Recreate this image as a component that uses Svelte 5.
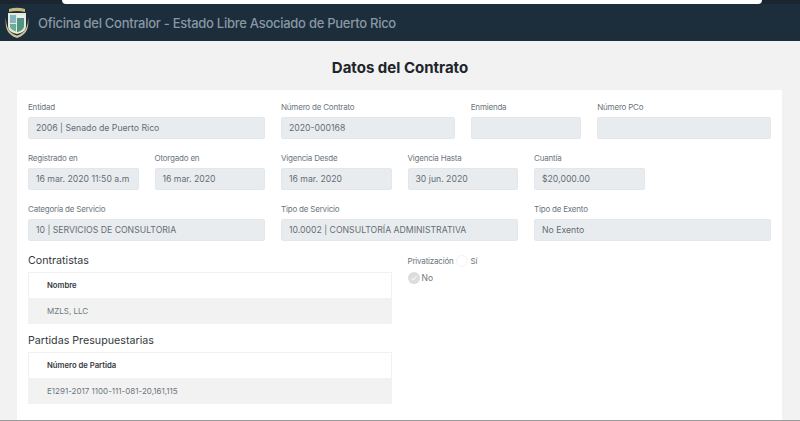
<script lang="ts">
    type Field = { label: string; value: string; span: number };

    const fields: Field[] = [
        { label: 'Entidad', value: '2006 | Senado de Puerto Rico', span: 4 },
        { label: 'Número de Contrato', value: '2020-000168', span: 3 },
        { label: 'Enmienda', value: '', span: 2 },
        { label: 'Número PCo', value: '', span: 3 },
        { label: 'Registrado en', value: '16 mar. 2020 11:50 a.m', span: 2 },
        { label: 'Otorgado en', value: '16 mar. 2020', span: 2 },
        { label: 'Vigencia Desde', value: '16 mar. 2020', span: 2 },
        { label: 'Vigencia Hasta', value: '30 jun. 2020', span: 2 },
        { label: 'Cuantía', value: '$20,000.00', span: 2 },
        { label: '', value: '', span: 2 },
        { label: 'Categoría de Servicio', value: '10 | SERVICIOS DE CONSULTORIA', span: 4 },
        { label: 'Tipo de Servicio', value: '10.0002 | CONSULTORÍA ADMINISTRATIVA', span: 4 },
        { label: 'Tipo de Exento', value: 'No Exento', span: 4 }
    ];

    const tables = [
        { title: 'Contratistas', head: 'Nombre', cell: 'MZLS, LLC' },
        { title: 'Partidas Presupuestarias', head: 'Número de Partida', cell: 'E1291-2017 1100-111-081-20,161,115' }
    ];
</script>

<div class="browser">
    <div class="urlbar"></div>
</div>

<header class="navbar">
    <svg class="logo" viewBox="0 0 26 32" width="26" height="32">
        <path d="M5 2 Q13 -0.5 21 2 L21 5 Q13 3 5 5 Z" fill="#c4b77c" />
        <path d="M4 6 H22 V19 C22 24 18 26 13 27 C8 26 4 24 4 19 Z" fill="#e6ead8" />
        <path d="M6 8 H12 V16 H6 Z" fill="#86b4c0" />
        <path d="M13 8 H20 V11 H13 Z" fill="#e9eef0" />
        <path d="M13 11 H20 V19 C20 22 17 24 14 25 L13 25 Z" fill="#4f9483" />
        <path d="M6 17 H12 V24.5 C9 23.5 6 22 6 19 Z" fill="#6fa99a" />
        <path d="M2 10 C0.5 20 3 28 13 31 C23 28 25.5 20 24 10 C24.5 20 21 26 13 28.5 C5 26 1.5 20 2 10 Z" fill="#cfc48e" />
    </svg>
    <span class="brand">Oficina del Contralor - Estado Libre Asociado de Puerto Rico</span>
</header>

<main class="page">
    <h1>Datos del Contrato</h1>

    <section class="card">
        <div class="grid">
            {#each fields as f}
                <div class="field" style="grid-column: span {f.span}">
                    {#if f.label}
                        <span class="label">{f.label}</span>
                        <div class="input">{f.value}</div>
                    {/if}
                </div>
            {/each}
        </div>

        <div class="lower">
            <div class="tables">
                {#each tables as t}
                    <h2>{t.title}</h2>
                    <div class="table">
                        <div class="th">{t.head}</div>
                        <div class="td">{t.cell}</div>
                    </div>
                {/each}
            </div>

            <div class="radios">
                <div class="radio-row">
                    <span class="label">Privatización</span>
                    <span class="radio"></span>
                    <span class="label">Sí</span>
                </div>
                <div class="radio-row no">
                    <span class="radio checked">
                        <svg viewBox="0 0 12 12" width="12" height="12">
                            <path d="M3.5 6.2 L5.3 8 L8.7 4.2" fill="none" stroke="#f4f4f4" stroke-width="1.2" />
                        </svg>
                    </span>
                    <span class="label big">No</span>
                </div>
            </div>
        </div>
    </section>
</main>

<style>
    :global(body) {
        margin: 0;
        background: #f2f2f3;
        font-family: Inter, "Liberation Sans", sans-serif;
        overflow: hidden;
    }

    .browser {
        height: 4px;
        background: #1a2530;
        display: flex;
        padding: 0 38px 0 62px;
    }

    .urlbar {
        flex: 1;
        background: #fff;
        border-radius: 0 0 6px 6px;
    }

    .navbar {
        height: 37px;
        background: #1c2d3c;
        display: flex;
        align-items: center;
        padding: 0 6px 0 4px;
        gap: 8px;
    }

    .logo {
        flex: none;
    }

    .brand {
        font-size: 13px;
        letter-spacing: -0.27px;
        font-weight: 500;
        color: #8a97a3;
        white-space: nowrap;
    }

    .page {
        height: 380px;
        border-bottom: 1px solid #9a9a9a;
        box-sizing: border-box;
        display: flex;
        flex-direction: column;
        align-items: center;
    }

    h1 {
        margin: 17px 0 13px;
        font-size: 15px;
        line-height: 19px;
        font-weight: 700;
        color: #212529;
    }

    .card {
        align-self: flex-start;
        box-sizing: border-box;
        width: 765px;
        margin-left: 17px;
        flex: 1;
        background: #fff;
        padding: 11px 11px 0;
    }

    .grid,
    .lower {
        display: grid;
        grid-template-columns: repeat(12, 1fr);
        column-gap: 16px;
    }

    .grid {
        row-gap: 10px;
    }

    .field {
        min-height: 41px;
    }

    .label {
        display: block;
        font-size: 8px;
        letter-spacing: -0.2px;
        line-height: 12px;
        color: #6c757d;
        white-space: nowrap;
    }

    .label.big {
        font-size: 8.5px;
        letter-spacing: 0;
    }

    .input {
        box-sizing: border-box;
        height: 22px;
        margin-top: 4px;
        padding: 0 7px;
        background: #e9ecef;
        border: 1px solid #e3e6ea;
        border-radius: 2px;
        font-size: 8.7px;
        line-height: 21px;
        color: #666d74;
        white-space: nowrap;
    }

    .lower {
        margin-top: 9px;
    }

    .tables {
        grid-column: span 6;
    }

    h2 {
        margin: 0 0 3px;
        font-size: 10.7px;
        line-height: 16px;
        font-weight: 400;
        color: #343a40;
    }

    .table {
        border: 1px solid #f1f1f1;
        border-bottom: none;
        margin-bottom: 9px;
        box-sizing: border-box;
    }

    .th,
    .td {
        height: 26px;
        line-height: 26px;
        padding-left: 18px;
        font-size: 8px;
    }

    .th {
        height: 25px;
        font-weight: 600;
        font-size: 7.7px;
        color: #343a40;
    }

    .td {
        background: #f2f2f2;
        color: #6c757d;
    }

    .radios {
        grid-column: span 6;
    }

    .radio-row {
        display: flex;
        align-items: center;
        height: 14px;
        margin-top: 1px;
    }

    .radio-row.no {
        margin-top: 3px;
    }

    .radio {
        width: 12px;
        height: 12px;
        border-radius: 50%;
        background: #fff;
        border: 1px solid #f3f3f3;
        box-sizing: border-box;
        margin: 0 3px 0 2px;
    }

    .radio.checked {
        background: #dcdcdc;
        border: none;
        margin-left: 0;
        margin-right: 2px;
        display: flex;
    }
</style>
